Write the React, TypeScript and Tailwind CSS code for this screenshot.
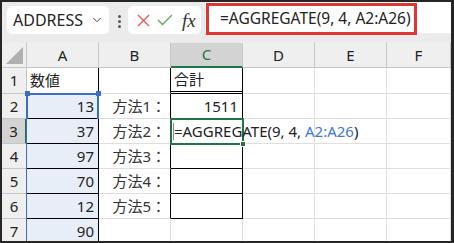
import { ChevronDown } from 'lucide-react';

const font = { fontFamily: '"Noto Sans", "Noto Sans CJK JP", sans-serif' };

const cols = ['A', 'B', 'C', 'D', 'E', 'F'];
const values = [13, 37, 97, 70, 12, 90];

const Toolbar = () => (
  <div className="h-[41px] bg-[#ebebeb] flex items-start shrink-0">
    {/* name box */}
    <div className="mt-[4px] ml-[5px] w-[102px] h-[28px] bg-white rounded-[5px] flex items-center pl-[6px] pr-[5px]">
      <span className="text-[16px] text-[#222] leading-none flex-1">ADDRESS</span>
      <ChevronDown size={14} strokeWidth={1.6} className="text-[#444]" />
    </div>
    <div className="mt-[13px] ml-[9px] w-[3px] flex flex-col gap-[2px]">
      <span className="w-[3px] h-[3px] rounded-full bg-[#555]" />
      <span className="w-[3px] h-[3px] rounded-full bg-[#555]" />
      <span className="w-[3px] h-[3px] rounded-full bg-[#555]" />
    </div>
    {/* cancel / enter / fx */}
    <div className="mt-[4px] ml-[7px] w-[73px] h-[28px] bg-white rounded-[5px] flex items-center pl-[9px] gap-[7px]">
      <svg width="13" height="13" viewBox="0 0 13 13" fill="none" stroke="#e25b5b" strokeWidth="1.4">
        <path d="M1 1 L12 12 M12 1 L1 12" />
      </svg>
      <svg width="16" height="12" viewBox="0 0 16 12" fill="none" stroke="#5aab5a" strokeWidth="1.4">
        <path d="M1 6 L5.5 10.5 L15 1" />
      </svg>
      <span className="text-[19px] italic text-[#333] leading-none ml-[2px]" style={{ fontFamily: '"Liberation Serif", "DejaVu Serif", serif' }}>
        fx
      </span>
    </div>
    {/* formula input */}
    <div className="relative ml-[4px] flex-1 h-[31px] bg-white">
      <div className="absolute left-[1px] top-[1px] w-[211px] h-[32px] border-[3px] border-[#e03535] flex items-center pl-[11px]">
        <span className="text-[15.5px] text-[#222] leading-none whitespace-nowrap">=AGGREGATE(9, 4, A2:A26)</span>
      </div>
    </div>
  </div>
);

const HeaderRow = () => (
  <>
    <div className="relative bg-[#efefef] border-r border-b border-[#c6c6c6]">
      <div className="absolute right-[3px] bottom-[3px] w-0 h-0 border-l-[17px] border-l-transparent border-b-[17px] border-b-[#b0b0b0]" />
    </div>
    {cols.map((c) => {
      const active = c === 'C';
      return (
        <div
          key={c}
          className={
            active
              ? 'bg-[#d3d3d3] border-r border-[#c6c6c6] border-b-2 border-b-[#217346] flex items-center justify-center text-[15px] text-[#217346]'
              : 'bg-[#efefef] border-r border-b border-[#c6c6c6] flex items-center justify-center text-[15px] text-[#222]'
          }
        >
          {c}
        </div>
      );
    })}
  </>
);

const RowHead = ({ n }: { n: number }) =>
  n === 3 ? (
    <div className="bg-[#d3d3d3] border-b border-[#c6c6c6] border-r-2 border-r-[#217346] flex items-center justify-center text-[15px] text-[#222]">
      {n}
    </div>
  ) : (
    <div className="bg-[#efefef] border-r border-b border-[#c6c6c6] flex items-center justify-center text-[15px] text-[#222]">
      {n}
    </div>
  );

const gray = 'border-r border-b border-[#dedede]';

export default function App() {
  return (
    <div
      className="w-[454px] h-[243px] overflow-hidden bg-white border-t-2 border-l-2 border-b-2 border-r-[3px] border-[#262626] flex flex-col"
      style={font}
    >
      <Toolbar />
      <div className="relative flex-1 overflow-hidden grid grid-cols-[25px_72px_72px_72px_72px_72px_1fr] grid-rows-[25px_26px_25px_25px_25px_25px_25px_25px] text-[15px] text-[#222]">
        <HeaderRow />

        {/* row 1 */}
        <RowHead n={1} />
        <div className="border-r border-b border-black flex items-center pl-[3px]">数値</div>
        <div className="border-b border-[#dedede] border-r border-r-black" />
        <div className="border-r border-black border-b-[3px] border-double flex items-center pl-[3px]">合計</div>
        <div className={gray} />
        <div className={gray} />
        <div className={gray} />

        {[2, 3, 4, 5, 6, 7].map((r) => {
          const v = values[r - 2];
          const label = r <= 6 ? `方法${r - 1}：` : '';
          return (
            <div key={r} className="contents">
              <RowHead n={r} />
              <div className="relative bg-[#e8eef8] border-r border-b border-black flex items-center justify-end pr-[4px]">
                {v}
                {r === 2 && (
                  <>
                    <div className="absolute left-[-1px] top-[-1px] w-[73px] h-[200px] border-2 border-b-0 border-[#3b6fc6] pointer-events-none" />
                    <div className="absolute left-[-2px] top-[-3px] w-[5px] h-[5px] bg-[#3b6fc6]" />
                    <div className="absolute right-[-3px] top-[-3px] w-[5px] h-[5px] bg-[#3b6fc6]" />
                  </>
                )}
              </div>
              <div
                className={`border-b border-[#dedede] border-r ${r <= 6 ? 'border-r-black' : 'border-r-[#dedede]'} flex items-center justify-end pr-[4px] text-[#333]`}
              >
                {label}
              </div>
              {r === 3 ? (
                <div className="relative z-10 border-r border-b border-black">
                  <div className="absolute left-[-1px] top-[-1px] w-[74px] h-[27px] border-2 border-[#217346]" />
                  <div className="absolute right-[-4px] bottom-[-4px] w-[6px] h-[6px] bg-[#217346] border border-white" />
                  <div className="absolute left-[2px] top-[4px] w-px h-[17px] bg-[#8a8a8a]" />
                  <div className="absolute left-[3px] top-0 h-full flex items-center whitespace-pre">
                    {'=AGGREGATE(9, 4, '}
                    <span className="text-[#3f78d2]">A2:A26</span>)
                  </div>
                </div>
              ) : (
                <div
                  className={`border-r ${r <= 6 ? 'border-b border-black' : 'border-b border-[#dedede] border-r-[#dedede]'} flex items-center justify-end pr-[4px]`}
                >
                  {r === 2 ? 1511 : ''}
                </div>
              )}
              <div className={gray} />
              <div className={gray} />
              <div className={gray} />
            </div>
          );
        })}
      </div>
    </div>
  );
}
